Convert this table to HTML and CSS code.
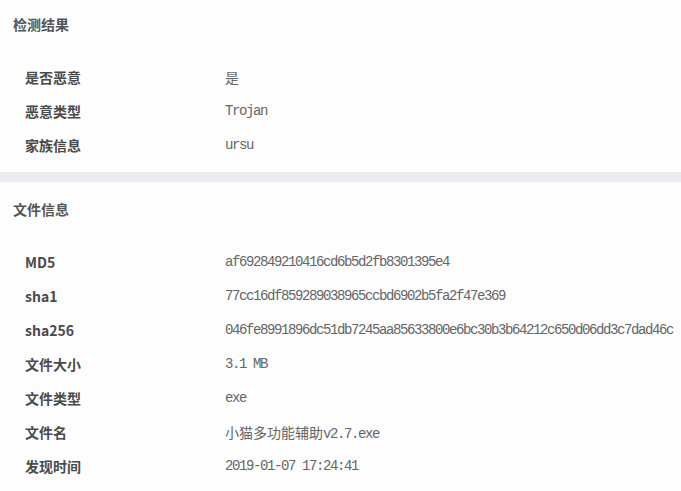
FILE: index.html
```html
<!DOCTYPE html>
<html lang="zh-CN">
<head>
  <meta charset="UTF-8">
  <meta name="viewport" content="width=device-width, initial-scale=1.0">
  <title>检测结果</title>
  <link rel="stylesheet" href="styles.css">
</head>
<body>
  <div class="panel first">
    <h2>检测结果</h2>
    <table class="info">
      <tr><th>是否恶意</th><td><span class="cjk">是</span></td></tr>
      <tr><th>恶意类型</th><td>Trojan</td></tr>
      <tr><th>家族信息</th><td>ursu</td></tr>
    </table>
  </div>

  <div class="panel">
    <h2>文件信息</h2>
    <table class="info">
      <tr><th>MD5</th><td>af692849210416cd6b5d2fb8301395e4</td></tr>
      <tr><th>sha1</th><td>77cc16df859289038965ccbd6902b5fa2f47e369</td></tr>
      <tr><th>sha256</th><td>046fe8991896dc51db7245aa85633800e6bc30b3b64212c650d06dd3c7dad46c</td></tr>
      <tr><th>文件大小</th><td>3.1 MB</td></tr>
      <tr><th>文件类型</th><td>exe</td></tr>
      <tr><th>文件名</th><td><span class="cjk">小猫多功能辅助</span>v2.7.exe</td></tr>
      <tr><th>发现时间</th><td>2019-01-07 17:24:41</td></tr>
    </table>
  </div>
</body>
</html>
```

FILE: styles.css
```css
body {
  margin: 0;
  background-color: #e9ecf0;
  font-family: "Noto Sans CJK SC", "Noto Sans", sans-serif;
}
.panel {
  background-color: #fdfdfd;
  padding: 3px 0 10px;
  margin-bottom: 10px;
}
.panel.first {
  padding-top: 0;
}
h2 {
  margin: 0;
  padding-left: 13px;
  height: 48px;
  line-height: 48px;
  font-size: 14px;
  font-weight: bold;
  color: #555;
}
.info {
  border-collapse: collapse;
  margin-top: 12px;
}
.info th,
.info td {
  height: 34px;
  padding: 0;
  text-align: left;
  vertical-align: middle;
  white-space: nowrap;
}
.info th {
  width: 200px;
  padding-left: 25px;
  font-size: 14px;
  font-weight: bold;
  color: #4a4a4a;
}
.info td {
  font-family: "Liberation Mono", "Noto Sans CJK SC", monospace;
  font-size: 14px;
  letter-spacing: -1.4px;
  color: #666;
}
.cjk {
  font-family: "Noto Sans CJK SC", sans-serif;
  letter-spacing: 0;
}
```
